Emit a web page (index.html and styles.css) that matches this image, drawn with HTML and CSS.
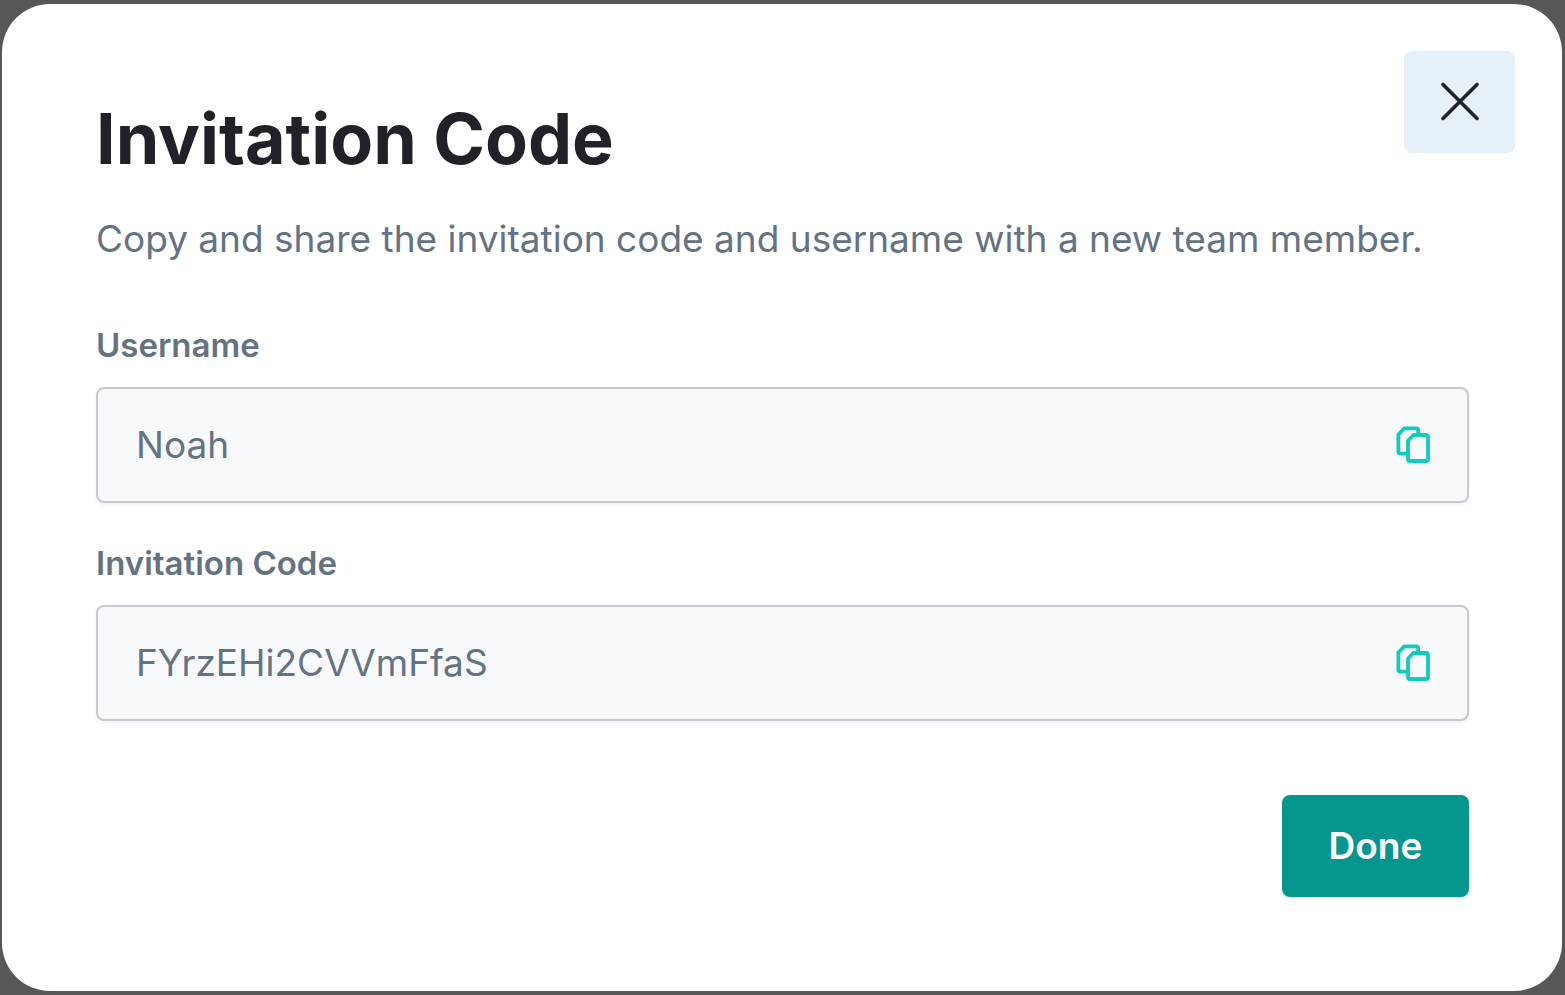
FILE: index.html
```html
<!DOCTYPE html>
<html lang="en">
<head>
<meta charset="utf-8">
<meta name="viewport" content="width=device-width, initial-scale=1">
<title>Invitation Code</title>
<link rel="stylesheet" href="styles.css">
</head>
<body>
<main class="dialog" role="dialog" aria-labelledby="title">
  <button class="close" type="button" aria-label="Close">
    <svg width="40" height="40" viewBox="0 0 40 40" fill="none" stroke="currentColor" stroke-width="3.6" stroke-linecap="round"><path d="M3 2.5L37 36.500M37 2.500L3 36.500"/></svg>
  </button>
  <h1 class="title" id="title">Invitation Code</h1>
  <p class="intro">Copy and share the invitation code and username with a new team member.</p>
  <form class="form">
    <label class="label" for="username">Username</label>
    <div class="field">
      <input class="input" id="username" type="text" value="Noah" readonly>
      <button class="copy" type="button" aria-label="Copy username">
        <svg width="36" height="40" viewBox="0 0 36 40" fill="none" stroke="currentColor" stroke-width="3.8" stroke-linejoin="round"><path d="M13 28.700H5.400Q3.400 28.700 3.400 26.700V9.500L9.200 3.300H21.200Q23.200 3.300 23.200 5.300V10"/><path d="M18.400 10H31Q33 10 33 12V34Q33 36 31 36H15Q13 36 13 34V15.800Z"/></svg>
      </button>
    </div>
    <label class="label" for="code">Invitation Code</label>
    <div class="field">
      <input class="input" id="code" type="text" value="FYrzEHi2CVVmFfaS" readonly>
      <button class="copy" type="button" aria-label="Copy invitation code">
        <svg width="36" height="40" viewBox="0 0 36 40" fill="none" stroke="currentColor" stroke-width="3.8" stroke-linejoin="round"><path d="M13 28.700H5.400Q3.400 28.700 3.400 26.700V9.500L9.200 3.300H21.200Q23.200 3.300 23.200 5.300V10"/><path d="M18.400 10H31Q33 10 33 12V34Q33 36 31 36H15Q13 36 13 34V15.800Z"/></svg>
      </button>
    </div>
    <div class="actions"><button class="done" type="button">Done</button></div>
  </form>
</main>
</body>
</html>
```
FILE: styles.css
```css
* { box-sizing: border-box; }
body {
  margin: 0;
  min-height: 100vh;
  padding: 4px 3px 4px 2px;
  display: flex;
  background: #565758;
  font-family: Inter, "Liberation Sans", sans-serif;
  color: #637384;
}
.dialog {
  position: relative;
  flex: 1;
  padding: 95px 93px 92px 94px;
  background: #fff;
  border-radius: 48px;
}
.close {
  position: absolute;
  top: 47px;
  right: 47px;
  width: 111px;
  height: 102px;
  display: grid;
  place-items: center;
  padding: 0;
  border: 0;
  border-radius: 8px;
  background: #e5f0f8;
  color: #212326;
}
.title {
  margin: 0;
  font-size: 70px;
  line-height: 80px;
  font-weight: 700;
  color: #202227;
}
.intro {
  margin: 32px 0 58px;
  font-size: 37px;
  line-height: 56px;
}
.label {
  display: block;
  font-size: 33px;
  line-height: 40px;
  font-weight: 600;
}
.field {
  display: flex;
  align-items: center;
  height: 116px;
  margin: 22px 0 40px;
  border: 2px solid #c5cad2;
  border-radius: 8px;
  background: #f8f9fb;
  box-shadow: 0 2px 4px rgba(16, 24, 40, 0.06);
}
.input {
  flex: 1;
  min-width: 0;
  padding: 0 0 0 38px;
  border: 0;
  outline: 0;
  background: transparent;
  color: inherit;
  font: 400 37px/48px Inter, "Liberation Sans", sans-serif;
}
.copy {
  display: flex;
  margin-right: 36px;
  padding: 0;
  border: 0;
  background: none;
  color: #12cac0;
}
.actions {
  display: flex;
  justify-content: flex-end;
  margin-top: 74px;
}
.done {
  width: 187px;
  height: 102px;
  border: 0;
  border-radius: 8px;
  background: #05968e;
  color: #fff;
  font: 600 37px/48px Inter, "Liberation Sans", sans-serif;
}
```
